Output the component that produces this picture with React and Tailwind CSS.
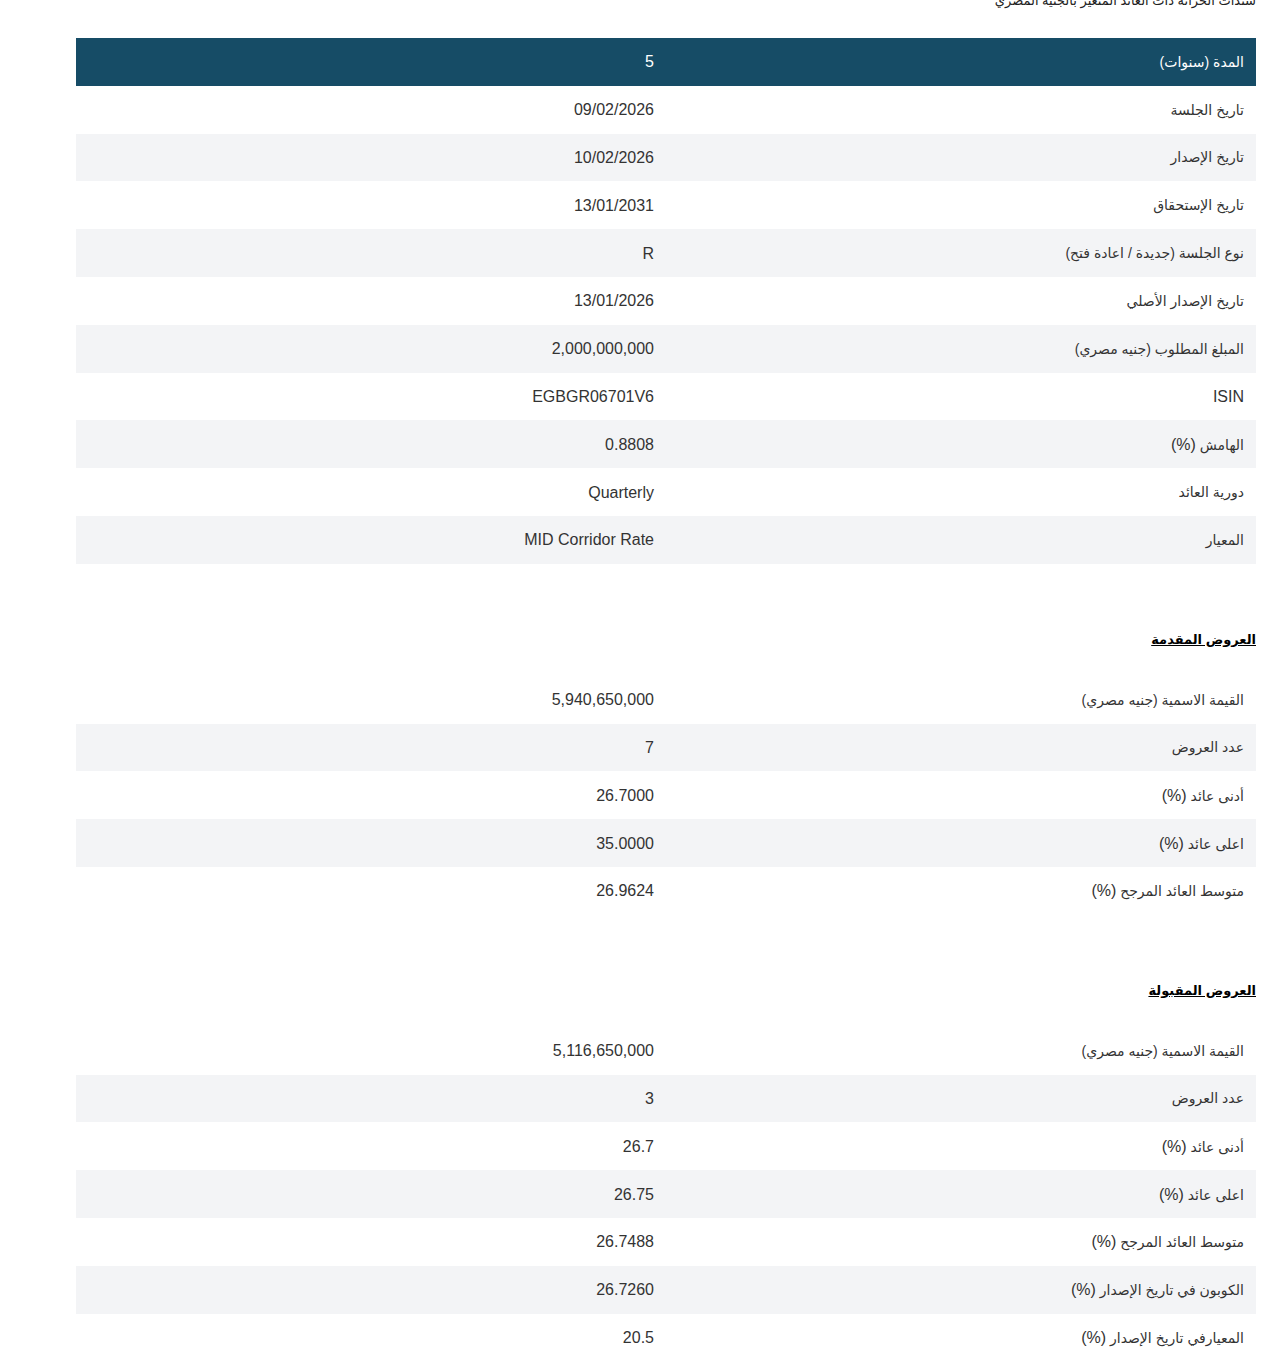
const info = [
  ['المدة (سنوات)', '5'],
  ['تاريخ الجلسة', '09/02/2026'],
  ['تاريخ الإصدار', '10/02/2026'],
  ['تاريخ الإستحقاق', '13/01/2031'],
  ['نوع الجلسة (جديدة / اعادة فتح)', 'R'],
  ['تاريخ الإصدار الأصلي', '13/01/2026'],
  ['المبلغ المطلوب (جنيه مصري)', '2,000,000,000'],
  ['ISIN', 'EGBGR06701V6'],
  ['الهامش (%)', '0.8808'],
  ['دورية العائد', 'Quarterly'],
  ['المعيار', 'MID Corridor Rate'],
];

const offered = [
  ['القيمة الاسمية (جنيه مصري)', '5,940,650,000'],
  ['عدد العروض', '7'],
  ['أدنى عائد (%)', '26.7000'],
  ['اعلى عائد (%)', '35.0000'],
  ['متوسط العائد المرجح (%)', '26.9624'],
];

const accepted = [
  ['القيمة الاسمية (جنيه مصري)', '5,116,650,000'],
  ['عدد العروض', '3'],
  ['أدنى عائد (%)', '26.7'],
  ['اعلى عائد (%)', '26.75'],
  ['متوسط العائد المرجح (%)', '26.7488'],
  ['الكوبون في تاريخ الإصدار (%)', '26.7260'],
  ['المعيارفي تاريخ الإصدار (%)', '20.5'],
];

// latin bits in the labels render larger than the arabic
function Label({ text }) {
  const parts = text.split(/(\(%\)|ISIN)/);
  return parts.map((p, i) =>
    i % 2 === 1 ? (
      <span key={i} className="text-[16px]">{p}</span>
    ) : (
      <span key={i}>{p}</span>
    )
  );
}

function Rows({ rows, header }) {
  return (
    <table className="w-full border-collapse table-fixed">
      <tbody>
        {rows.map(([label, value], i) => {
          const isHead = header && i === 0;
          const stripe = header ? i % 2 === 0 : i % 2 === 1;
          const bg = isHead ? 'bg-[#164c66] text-white' : stripe ? 'bg-[#f3f4f6] text-[#333]' : 'bg-white text-[#333]';
          return (
            <tr key={i} className={`h-[47.8px] ${bg}`}>
              <td className="w-1/2 px-3 pt-px text-right text-[14px]">
                <Label text={label} />
              </td>
              <td className="w-1/2 px-3 pt-px text-right text-[16px]">{value}</td>
            </tr>
          );
        })}
      </tbody>
    </table>
  );
}

export default function App() {
  return (
    <div dir="rtl" className="bg-white min-h-[1359px] overflow-hidden font-['Liberation_Sans','DejaVu_Sans',sans-serif]">
      <div className="mr-2 ml-[76px]">
        <h1 className="-mt-[8px] text-[13px] leading-[18px] text-[#222] font-normal">
          سندات الخزانة ذات العائد المتغير بالجنيه المصري
        </h1>
        <div className="mt-[28px]">
          <Rows rows={info} header />
        </div>

        <h2 className="mt-[66px] mb-[26px] text-[13px] leading-[20px] font-bold text-black underline">
          العروض المقدمة
        </h2>
        <Rows rows={offered} />

        <h2 className="mt-[66px] mb-[26px] text-[13px] leading-[20px] font-bold text-black underline">
          العروض المقبولة
        </h2>
        <Rows rows={accepted} />
      </div>
    </div>
  );
}
